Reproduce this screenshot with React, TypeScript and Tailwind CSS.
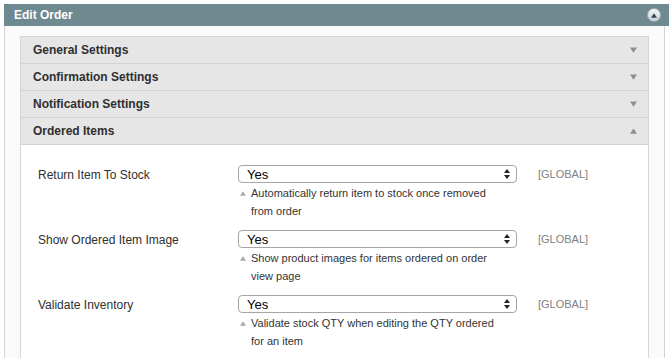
import React from 'react';

const sections = [
  { title: 'General Settings', open: false },
  { title: 'Confirmation Settings', open: false },
  { title: 'Notification Settings', open: false },
  { title: 'Ordered Items', open: true },
];

const fields = [
  { label: 'Return Item To Stock', note: 'Automatically return item to stock once removed from order' },
  { label: 'Show Ordered Item Image', note: 'Show product images for items ordered on order view page' },
  { label: 'Validate Inventory', note: 'Validate stock QTY when editing the QTY ordered for an item' },
];

const Caret: React.FC<{ up?: boolean; className?: string }> = ({ up, className }) => (
  <svg width="8" height="6" viewBox="0 0 8 6" className={className}>
    <path d={up ? 'M4 0 L8 6 L0 6 Z' : 'M0 0 L8 0 L4 6 Z'} fill="currentColor" />
  </svg>
);

const SelectBox: React.FC = () => (
  <div className="w-[279px] h-[18px] rounded-[4px] border border-[#a6a6a6] bg-white flex items-center justify-between pl-[8px] pr-[6px] text-[13px] text-black leading-none">
    <span>Yes</span>
    <svg width="6" height="10" viewBox="0 0 6 10" className="text-[#222]">
      <path d="M3 0 L6 4 L0 4 Z M0 6 L6 6 L3 10 Z" fill="currentColor" />
    </svg>
  </div>
);

export default function App() {
  return (
    <div className="w-[669px] h-[358px] bg-white pl-[4px] pt-[4px] overflow-hidden font-['Liberation_Sans',Arial,sans-serif]">
      {/* Header bar */}
      <div className="h-[22px] bg-[#6f8990] flex items-center justify-between pl-[10px] pr-[8px]">
        <span className="text-white font-bold text-[12px]">Edit Order</span>
        <div className="w-[14px] h-[14px] rounded-full bg-gradient-to-b from-[#f4f6f7] to-[#c9d2d5] border border-[#9fb0b5] flex items-center justify-center">
          <Caret up className="text-[#2c4a55] w-[6px] h-[5px]" />
        </div>
      </div>

      {/* Body */}
      <div className="mr-[4px] h-[400px] border-l border-r border-[#d4d4d4] bg-[#fafafa] px-[15px] pt-[10px]">
        <div className="border border-[#d6d6d6] bg-white">
          {sections.map((s) => (
            <div
              key={s.title}
              className="h-[27px] bg-[#e6e6e6] border-b border-[#d3d3d3] flex items-center justify-between pl-[12px] pr-[11px]"
            >
              <span className="text-[12px] font-bold text-[#2f2f2f]">{s.title}</span>
              <Caret up={s.open} className="text-[#8f8f8f] w-[7px] h-[6px]" />
            </div>
          ))}

          {/* Ordered Items content */}
          <div className="pt-[20px] pb-[20px] pl-[17px] flex flex-col gap-[10px]">
            {fields.map((f) => (
              <div key={f.label} className="flex items-start">
                <div className="w-[200px] h-[18px] pt-[2px] flex items-center text-[12px] text-[#2f2f2f]">{f.label}</div>
                <div className="flex flex-col">
                  <SelectBox />
                  <div className="flex items-start pl-[2px] mt-[1px]">
                    <Caret up className="text-[#aaaaaa] w-[6px] h-[5px] mt-[7px] mr-[5px] shrink-0" />
                    <p className="w-[245px] text-[11px] leading-[18px] text-[#333]">{f.note}</p>
                  </div>
                </div>
                <div className="ml-[21px] h-[18px] flex items-center text-[11px] text-[#808080]">[GLOBAL]</div>
              </div>
            ))}
          </div>
        </div>
      </div>
    </div>
  );
}
